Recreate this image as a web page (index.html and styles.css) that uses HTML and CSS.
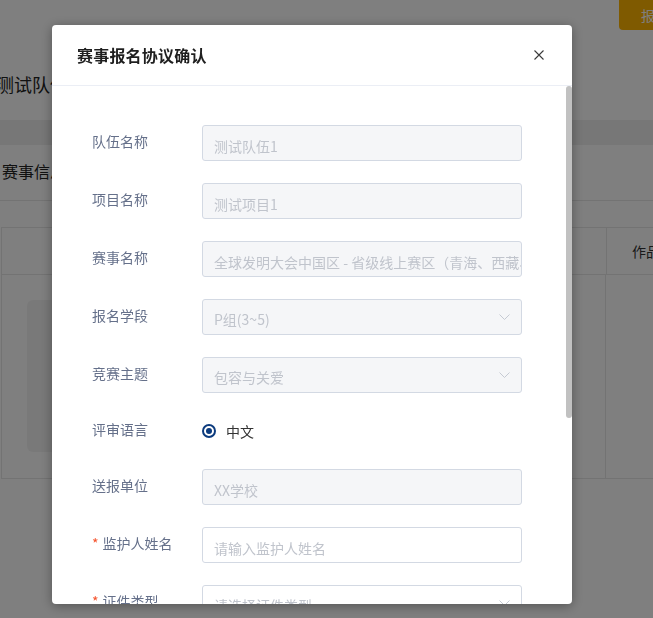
FILE: index.html
```html
<!DOCTYPE html>
<html lang="zh">
<head>
<meta charset="utf-8">
<title>赛事报名协议确认</title>
<link rel="stylesheet" href="styles.css">
</head>
<body>
<div class="page">
  <div class="topbar"><button class="btn-signup">报名</button></div>
  <h1 class="team-name">测试队伍1</h1>
  <div class="band"></div>
  <h2 class="section-title">赛事信息</h2>
  <div class="table">
    <div class="thead">
      <div class="th th-main"></div>
      <div class="th th-works">作品</div>
    </div>
    <div class="tbody">
      <div class="td td-main"><div class="cover"></div></div>
      <div class="td td-works"></div>
    </div>
  </div>
</div>

<div class="mask"></div>

<div class="dialog">
  <div class="dialog-header">
    <span class="dialog-title">赛事报名协议确认</span>
    <svg class="close-icon" width="10" height="10" viewBox="0 0 10 10"><path d="M0.5 0.5L9.5 9.5M9.5 0.5L0.5 9.5" stroke="#3a3a3a" stroke-width="1.1" fill="none"/></svg>
  </div>
  <div class="dialog-main">
    <div class="dialog-body">
      <div class="form-row">
        <label class="form-label">队伍名称</label>
        <div class="field disabled">测试队伍1</div>
      </div>
      <div class="form-row">
        <label class="form-label">项目名称</label>
        <div class="field disabled">测试项目1</div>
      </div>
      <div class="form-row">
        <label class="form-label">赛事名称</label>
        <div class="field disabled">全球发明大会中国区 - 省级线上赛区（青海、西藏、新疆）</div>
      </div>
      <div class="form-row">
        <label class="form-label">报名学段</label>
        <div class="field disabled select"><span class="field-text">P组(3~5)</span><svg class="chevron" width="11" height="6" viewBox="0 0 11 6"><path d="M0.5 0.5L5.5 5.5L10.5 0.5" stroke="#c5cad3" stroke-width="1" fill="none"/></svg></div>
      </div>
      <div class="form-row">
        <label class="form-label">竞赛主题</label>
        <div class="field disabled select"><span class="field-text">包容与关爱</span><svg class="chevron" width="11" height="6" viewBox="0 0 11 6"><path d="M0.5 0.5L5.5 5.5L10.5 0.5" stroke="#c5cad3" stroke-width="1" fill="none"/></svg></div>
      </div>
      <div class="form-row radio-row">
        <label class="form-label">评审语言</label>
        <div class="radio-group">
          <span class="radio"><span class="radio-dot"></span></span>
          <span class="radio-label">中文</span>
        </div>
      </div>
      <div class="form-row">
        <label class="form-label">送报单位</label>
        <div class="field disabled">XX学校</div>
      </div>
      <div class="form-row">
        <label class="form-label"><span class="req">*</span>监护人姓名</label>
        <div class="field">请输入监护人姓名</div>
      </div>
      <div class="form-row">
        <label class="form-label"><span class="req">*</span>证件类型</label>
        <div class="field select"><span class="field-text">请选择证件类型</span><svg class="chevron" width="11" height="6" viewBox="0 0 11 6"><path d="M0.5 0.5L5.5 5.5L10.5 0.5" stroke="#c5cad3" stroke-width="1" fill="none"/></svg></div>
      </div>
      <div class="form-row">
        <label class="form-label"><span class="req">*</span>证件号码</label>
        <div class="field">请输入证件号码</div>
      </div>
      <div class="form-row">
        <label class="form-label"><span class="req">*</span>联系电话</label>
        <div class="field">请输入联系电话</div>
      </div>
      <div class="form-row">
        <label class="form-label">电子邮箱</label>
        <div class="field">请输入电子邮箱</div>
      </div>
    </div>
    <div class="scrollbar"><div class="scroll-thumb"></div></div>
  </div>
</div>
</body>
</html>
```

FILE: styles.css
```css
html, body {
  margin: 0;
  overflow: hidden;
}

body {
  background: #fff;
  font-family: "Noto Sans CJK SC", "Noto Sans", sans-serif;
  color: #222;
}

.page {
  width: 740px;
}

.topbar {
  height: 30px;
  display: flex;
  justify-content: flex-end;
  align-items: flex-end;
}

.btn-signup {
  width: 80px;
  height: 36px;
  margin-right: 41px;
  border: none;
  border-radius: 4px;
  background: #ffb400;
  color: #fff;
  font-family: inherit;
  font-size: 14px;
  text-align: left;
  padding: 6px 0 0 22px;
}

.team-name {
  margin: 40px 0 22px -4px;
  font-size: 18px;
  line-height: 28px;
  font-weight: 400;
  color: #222;
}

.band {
  height: 25px;
  background: #eeeeee;
}

.section-title {
  margin: 0;
  padding: 14px 0 17px 2px;
  font-size: 16px;
  line-height: 24px;
  font-weight: 400;
  color: #222;
  border-bottom: 1px solid #e6e6e6;
}

.table {
  margin: 26px 0 0 1px;
  width: 739px;
  border: 1px solid #e6e6e6;
  border-right: none;
}

.thead {
  display: flex;
  height: 46px;
  border-bottom: 1px solid #e6e6e6;
}

.tbody {
  display: flex;
  height: 203px;
}

.th-main, .td-main {
  width: 604px;
  border-right: 1px solid #e6e6e6;
}

.th-works {
  padding-left: 25px;
  line-height: 46px;
  font-size: 14px;
  color: #333;
}

.td-main {
  padding: 25px 0 0 25px;
  box-sizing: border-box;
}

.cover {
  width: 220px;
  height: 152px;
  border-radius: 6px;
  background: #f3f3f3;
}

.mask {
  position: fixed;
  inset: 0;
  background: rgba(0, 0, 0, 0.5);
}

.dialog {
  position: fixed;
  left: 52px;
  top: 25px;
  width: 520px;
  height: 579px;
  background: #fff;
  border-radius: 4px;
  box-shadow: 0 2px 12px rgba(0, 0, 0, 0.35);
  display: flex;
  flex-direction: column;
  overflow: hidden;
}

.dialog-header {
  height: 60px;
  flex-shrink: 0;
  display: flex;
  align-items: center;
  justify-content: space-between;
  padding: 0 28px 0 25px;
  border-bottom: 1px solid #ebeef5;
}

.dialog-title {
  font-size: 16px;
  font-weight: 600;
  color: #1f1f1f;
  letter-spacing: 0.2px;
}

.close-icon {
  display: block;
}

.dialog-main {
  flex: 1;
  display: flex;
  overflow: hidden;
}

.dialog-body {
  flex: 1;
  overflow: hidden;
  padding: 39px 0 0 40px;
}

.scrollbar {
  width: 6px;
  flex-shrink: 0;
}

.scroll-thumb {
  height: 332px;
  border-radius: 3px;
  background: #c1c1c1;
}

.form-row {
  display: flex;
  align-items: center;
  height: 36px;
  margin-bottom: 22px;
}

.radio-row {
  height: 32px;
}

.form-label {
  width: 110px;
  flex-shrink: 0;
  font-size: 14px;
  color: #65708a;
  padding-bottom: 4px;
}

.req {
  color: #f5532d;
  margin-right: 4px;
}

.field {
  width: 320px;
  height: 36px;
  box-sizing: border-box;
  border: 1px solid #d3d9e3;
  border-radius: 3px;
  background: #fff;
  padding: 6px 0 0 11px;
  font-size: 14px;
  line-height: 28px;
  color: #c0c4cc;
  white-space: nowrap;
  overflow: hidden;
}

.field.disabled {
  background: #f5f6f8;
}

.field.select {
  display: flex;
  justify-content: space-between;
  align-items: center;
  padding: 4px 11px 0 11px;
}

.chevron {
  display: block;
  margin-bottom: 4px;
}

.radio-group {
  display: flex;
  align-items: center;
  gap: 10px;
}

.radio {
  width: 14px;
  height: 14px;
  box-sizing: border-box;
  border: 2px solid #0c3b7e;
  border-radius: 50%;
  display: flex;
  align-items: center;
  justify-content: center;
}

.radio-dot {
  width: 6px;
  height: 6px;
  border-radius: 50%;
  background: #0c3b7e;
}

.radio-label {
  font-size: 14px;
  color: #333;
}
```
